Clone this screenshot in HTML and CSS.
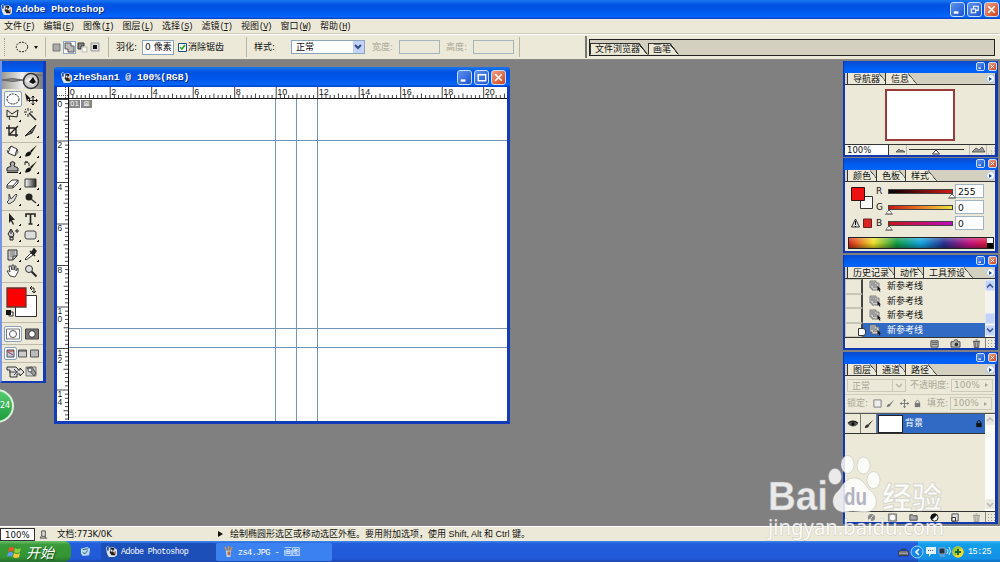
FILE: index.html
```html
<!DOCTYPE html>
<html lang="zh-CN">
<head>
    <meta charset="UTF-8">
    <meta name="viewport" content="width=device-width, initial-scale=1.0">
    <title>Adobe Photoshop</title>
    <link rel="stylesheet" href="styles.css">
</head>
<body>
<!-- Shared symbols -->
<svg class="defs">
    <symbol id="ps" viewBox="0 0 12 12"><path d="M0 2l2-2 2 2 4-1 4 3v6l-3 2H3L1 8z" fill="#dfe5ee"/><path d="M5 2h4v2L7 6l3 1v3H6L4 7z" fill="#222"/><path d="M1 1h2v4H1z" fill="#234fb0"/><path d="M8 7l3-2v5z" fill="#b88763"/><path d="M5 4h2v2H5z" fill="#fff"/></symbol>
    <symbol id="min" viewBox="0 0 14 14"><path d="M3 9h5v2.5H3z" fill="#fff"/></symbol>
    <symbol id="max" viewBox="0 0 14 14"><path d="M3.5 4h8v6.5h-8zM3 4h9" fill="none" stroke="#fff" stroke-width="1.5"/></symbol>
    <symbol id="restore" viewBox="0 0 14 14"><path d="M6 6V3.5h5V8H9M3.5 6.5h4.8v4H3.5z" fill="none" stroke="#fff" stroke-width="1.2"/></symbol>
    <symbol id="close" viewBox="0 0 14 14"><path d="M3.5 3.5l7 7m0-7l-7 7" stroke="#fff" stroke-width="1.8"/></symbol>
    <symbol id="state" viewBox="0 0 12 12"><path d="M1 1h6v2h3v7H3V8H1z" fill="#ccc" stroke="#666" stroke-width=".8"/><path d="M2 3h4M2 5h6M4 7h5" stroke="#555" stroke-width=".8"/><path d="M8.500 6l3.500 3.500h-1.500l1 2h-1.200l-.8-2-1 1z" fill="#111"/></symbol>
    <symbol id="trash" viewBox="0 0 10 10"><path d="M2 3h6l-.6 6.500H2.600zM1 2.500h8M4 1h2" fill="#bbb" stroke="#444" stroke-width=".9"/><path d="M4 4v5M6 4v5" stroke="#555" stroke-width=".8"/></symbol>
    <symbol id="lock" viewBox="0 0 8 10"><path d="M2 5V3q2-3 4 0v2" fill="none" stroke="currentColor"/><path d="M1 4.500h6V9H1z" fill="currentColor"/></symbol>
    <symbol id="brush" viewBox="0 0 14 14"><path d="M13 1L6 7l1.500 1.500zM6 7.500q-4 0-5 5 5 .5 6.500-3.500z" fill="currentColor"/></symbol>
</svg>

<header class="titlebar">
    <svg class="logo"><use href="#ps"/></svg><span>Adobe Photoshop</span>
    <div class="buttons big"><i><svg><use href="#min"/></svg></i><i><svg><use href="#restore"/></svg></i><i class="x"><svg><use href="#close"/></svg></i></div>
</header>

<nav class="menubar">
    <span>文件<b>(<u>F</u>)</b></span><span>编辑<b>(<u>E</u>)</b></span><span>图像<b>(<u>I</u>)</b></span>
    <span>图层<b>(<u>L</u>)</b></span><span>选择<b>(<u>S</u>)</b></span><span>滤镜<b>(<u>T</u>)</b></span>
    <span>视图<b>(<u>V</u>)</b></span><span>窗口<b>(<u>W</u>)</b></span><span>帮助<b>(<u>H</u>)</b></span>
</nav>

<div class="options">
    <div class="opt-tool"><i class="grip"></i>
        <svg width="14" height="12" viewBox="0 0 14 12"><ellipse cx="7" cy="6" rx="5.700" ry="4.800" fill="none" stroke="#222" stroke-dasharray="2 1"/></svg>
        <em class="down"></em></div>
    <div class="opt-modes">
        <svg viewBox="0 0 11 11"><path d="M2 2h7v7H2z" fill="#aaa" stroke="#777"/></svg>
        <svg class="on" viewBox="0 0 11 11"><path d="M1 1h6v3h3v6H4V7H1z" fill="#bbb" stroke="#555"/></svg>
        <svg viewBox="0 0 11 11"><path d="M1 1h6v3H4v3H1z" fill="#888" stroke="#333"/><path d="M5 5h5v5H5z" fill="#f8f8f0" stroke="#bbb"/></svg>
        <svg viewBox="0 0 11 11"><path d="M1 1h8v8H1z" fill="#ddd" stroke="#999"/><path d="M3 3h4v4H3z" fill="#111"/></svg>
    </div>
    <div class="opt-feather"><label>羽化:</label><span class="field">0 像素</span>
        <svg class="check" viewBox="0 0 9 9"><path d="M.5.5h8v8h-8z" fill="#fff" stroke="#1c5180"/><path d="M2 4l2 2 3-4" fill="none" stroke="#21a121" stroke-width="1.500"/></svg><label>消除锯齿</label></div>
    <div class="opt-style"><label>样式:</label>
        <span class="select">正常<i class="arrow"><svg viewBox="0 0 10 10"><path d="M2 4l3 3 3-3" fill="none" stroke="#334d86" stroke-width="2"/></svg></i></span>
        <label class="off">宽度:</label><span class="blank"></span><label class="off">高度:</label><span class="blank"></span></div>
    <div class="well"><div class="tabs"><span>文件浏览器</span><span>画笔</span></div></div>
</div>

<main class="workspace">
    <!-- Toolbox -->
    <section class="toolbox">
        <div class="tb-title"></div>
        <svg class="banner" viewBox="0 0 41 17"><defs><linearGradient id="bn"><stop stop-color="#9a9a94"/><stop offset=".5" stop-color="#eee"/><stop offset="1" stop-color="#777"/></linearGradient></defs><path d="M0 0h41v17H0z" fill="url(#bn)"/><path d="M0 8q10-3 21 0q-10 3-21 0M21 12Q28-1 41 4" fill="#888" stroke="#666"/><circle cx="29" cy="9" r="7.500" fill="#ccc" stroke="#333" stroke-width="1.500"/><path d="M23 9q6-6 12-1l-4 6-4-3z" fill="#eee"/><path d="M27 10l4-5 3 5-3 2z" fill="#111"/></svg>
        <div class="tools">
            <svg class="on" viewBox="0 0 16 14"><ellipse cx="8" cy="7" rx="6" ry="5" fill="none" stroke="#111" stroke-dasharray="2 1"/></svg>
            <svg viewBox="0 0 16 14"><path d="M2 1l6 6-3 0-1 3z" fill="#111"/><path d="M10 4v9M5.500 8.500h9M8.500 5.500L10 4l1.500 1.500M8.500 11.500L10 13l1.500-1.500M7 7L5.500 8.500 7 10M13 7l1.500 1.500L13 10" stroke="#111" fill="none"/></svg>
            <svg class="m" viewBox="0 0 16 14"><path d="M2 2l5 4 6-4-1 7-7-1-3 1zM5 8q-2 2 0 4" fill="none" stroke="#222"/></svg>
            <svg viewBox="0 0 16 14"><path d="M6 5l7 7" stroke="#222" stroke-width="1.500"/><path d="M5 0v3M5 6v3M1 4h3M7 4h3M2 1l1 1M8 1L7 2M2 7l1-1" stroke="#222"/></svg>
            <svg viewBox="0 0 16 14"><path d="M4 1v10h9M1 4h10v9M4 11l9-9" stroke="#222" stroke-width="1.400" fill="none"/></svg>
            <svg class="m" viewBox="0 0 16 14"><path d="M13 1L7 7l2 2zM7 7L2 12l7-3z" stroke="#222" fill="#777"/></svg>
        </div>
        <div class="tools">
            <svg class="m" viewBox="0 0 16 14"><path d="M6 2l6 3-2 7-7-3z" fill="#fff" stroke="#333"/><path d="M3 5l3-3M3 9L2 6M12 5l1 3-3 4" stroke="#555" fill="none"/></svg>
            <svg class="m" viewBox="0 0 16 14"><use href="#brush"/></svg>
            <svg class="m" viewBox="0 0 16 14"><path d="M6 6L5 3q3-3 5 0L9 6l4 2v3H2V8zM2 12.500h11" fill="#aaa" stroke="#222"/></svg>
            <svg class="m" viewBox="0 0 16 14"><use href="#brush"/><path d="M2 2q5 0 4 4M2 2v3M2 2h3" stroke="#222" fill="none"/></svg>
            <svg class="m" viewBox="0 0 16 14"><path d="M2 9l5-5h6L8 10H2zM8 10V12l5-5V4M2 10v2h6" fill="#fff" stroke="#333"/></svg>
            <svg class="m" viewBox="0 0 16 14"><defs><linearGradient id="gr"><stop stop-color="#fff"/><stop offset="1" stop-color="#222"/></linearGradient></defs><path d="M2 3h11v8H2z" fill="url(#gr)" stroke="#333"/></svg>
            <svg class="m" viewBox="0 0 16 14"><path d="M4 2l2 5 5-5 1 1-3 6-5 3-2-2 2-2z" fill="#ddd" stroke="#444"/></svg>
            <svg class="m" viewBox="0 0 16 14"><circle cx="6" cy="5" r="3.500" fill="#222"/><path d="M8 7l5 4" stroke="#333" stroke-width="1.500"/></svg>
        </div>
        <div class="tools">
            <svg class="m" viewBox="0 0 16 14"><path d="M4 1v10l2-2 2 4 1-1-2-4h3z" fill="#222"/></svg>
            <svg class="m" viewBox="0 0 16 14"><path d="M3 5V2h9v3M7.500 2v10M5.500 12h4" fill="none" stroke="#222" stroke-width="1.600"/></svg>
            <svg class="m" viewBox="0 0 16 14"><path d="M6 1l3 5-1 3H5L3 6zM5 9h3v3H5zM6 2v4M10 3h4M12 1v4" fill="#ccc" stroke="#222"/></svg>
            <svg class="m" viewBox="0 0 16 14"><rect x="2" y="3" width="11" height="8" rx="2" fill="#ddd" stroke="#444"/></svg>
        </div>
        <div class="tools">
            <svg class="m" viewBox="0 0 16 14"><path d="M3 2h9v6l-4 4H3zM8 12V8h4" fill="#ccc" stroke="#333"/><path d="M5 4h5M5 6h5M5 8h3" stroke="#777"/></svg>
            <svg class="m" viewBox="0 0 16 14"><path d="M8 5L2 11l1 1 7-5z" fill="#fff" stroke="#333"/><path d="M7 3l5 5M9 4l2-3 2 2-2 3z" fill="#222" stroke="#222" stroke-width="1.500"/></svg>
            <svg viewBox="0 0 16 14"><path d="M5 12L2 7q1-1 3 1L4 2l2 0 1 4V1h2v5l1-4 1 0v5l2-3v4l-3 5z" fill="#fff" stroke="#333" stroke-width=".9"/></svg>
            <svg viewBox="0 0 16 14"><circle cx="6" cy="5" r="3.500" fill="#ddd" stroke="#333"/><path d="M8.500 7.500l5 5" stroke="#222" stroke-width="2"/></svg>
        </div>
        <div class="swatches">
            <svg viewBox="0 0 40 38"><path d="M13.500 11.500h21v21h-21z" fill="#fff" stroke="#333"/><path d="M5 4h19v19H5z" fill="#f00" stroke="#633" stroke-width="1.300"/><path d="M28 4h4v5M28 4l2-2M28 4l2 2M32 9l-2-2M32 9l2-2" fill="none" stroke="#222"/><path d="M7 28h4v4H7z" fill="#fff" stroke="#222"/><path d="M4 26h5v5H4z" fill="#111"/></svg>
        </div>
        <div class="modes">
            <svg class="on" viewBox="0 0 16 14"><path d="M1.500 2h13v10h-13z" fill="#fff" stroke="#777"/><circle cx="8" cy="7" r="3.500" fill="#fff" stroke="#555"/></svg>
            <svg viewBox="0 0 16 14"><path d="M1.500 2h13v10h-13z" fill="#777" stroke="#444"/><circle cx="8" cy="7" r="3.300" fill="#fff" stroke="#333"/></svg>
        </div>
        <div class="modes screens">
            <svg class="on" viewBox="0 0 11 11"><path d="M2 2h7v7H2z" fill="#bcd" stroke="#456"/><path d="M3 4l5 3M2 3h7" stroke="#b33"/></svg>
            <svg viewBox="0 0 11 11"><path d="M1.500 2h8v7h-8z" fill="#ccc" stroke="#555"/><path d="M1 3h9" stroke="#444"/></svg>
            <svg viewBox="0 0 11 11"><path d="M1.500 2h8v7h-8z" fill="#bbb" stroke="#555"/></svg>
        </div>
        <div class="modes">
            <svg class="jump" viewBox="0 0 34 14"><path d="M2 2h9l2 2v1h2V3l4 4-4 4V9h-3v3H5V5H2z" fill="#ddd" stroke="#333"/><path d="M4 7h9M9 4l3 3-3 3" stroke="#444" fill="none"/><path d="M21 2h10v9H21z" fill="#ccc" stroke="#777"/><path d="M22 3l7 8 2-3-4-6z" fill="#999" stroke="#555"/><circle cx="25" cy="5" r="2" fill="#eee" stroke="#555"/></svg>
        </div>
    </section>

    <!-- Document window -->
    <section class="document">
        <div class="doc-title"><svg class="logo"><use href="#ps"/></svg><span>zheShan1 @ 100%(RGB)</span>
            <div class="buttons big"><i><svg><use href="#min"/></svg></i><i><svg><use href="#max"/></svg></i><i class="x"><svg><use href="#close"/></svg></i></div></div>
        <div class="doc-body">
            <svg class="corner" viewBox="0 0 12 12"><path d="M0 8.500h11M8.500 0v11" stroke="#555" stroke-dasharray="1 1"/><path d="M0 11.500h12M11.500 0v12" stroke="#111"/></svg>
            <svg class="ruler-h" id="rulerH"></svg>
            <svg class="ruler-v" id="rulerV"></svg>
            <div class="canvas" id="canvas"><span class="slice">01</span><span class="slice">⊠</span></div>
        </div>
    </section>

    <!-- Navigator -->
    <section class="palette navigator">
        <div class="pal-title"><div class="buttons"><i><svg><use href="#min"/></svg></i><i class="x"><svg><use href="#close"/></svg></i></div></div>
        <div class="tabs"><span>导航器</span><span>信息</span><em class="more"></em></div>
        <div class="nav-view"><div></div></div>
        <div class="nav-foot"><span>100%</span>
            <svg viewBox="0 0 106 10"><path d="M7 7l3-3 2 2 1-1 3 2zM83 7l4-4 3 2 3-3 3 5z" fill="#999" stroke="#444" stroke-width=".8"/><path d="M20 4.500h55" stroke="#333"/><path d="M43.500 9l3.500-4 3.500 4z" fill="#fff" stroke="#333"/><path d="M17.500 0v10M80.500 0v10M97.500 0v10" stroke="#bbb"/><path d="M99 9h1M102 9h1M105 9h1M102 6h1M105 6h1M105 3h1" stroke="#999"/></svg></div>
    </section>

    <!-- Color -->
    <section class="palette color">
        <div class="pal-title"><div class="buttons"><i><svg><use href="#min"/></svg></i><i class="x"><svg><use href="#close"/></svg></i></div></div>
        <div class="tabs"><span>颜色</span><span>色板</span><span>样式</span><em class="more"></em></div>
        <div class="color-body">
            <svg viewBox="0 0 28 50"><path d="M15.500 14.500h12v12h-12z" fill="#fff" stroke="#333"/><path d="M6.500 5.500h13v13h-13z" fill="#e11" stroke="#311"/><path d="M6.500 45l4-8 4 8z" fill="#ddd" stroke="#333"/><path d="M10.500 39v4M10.500 44v1" stroke="#111"/><path d="M18.500 37h8v8.500h-8z" fill="#d22" stroke="#622"/></svg>
            <div class="channels">
                <label>R</label><div class="bar red"><i class="end"></i></div><span>255</span>
                <label>G</label><div class="bar green"><i></i></div><span>0</span>
                <label>B</label><div class="bar blue"><i></i></div><span>0</span>
            </div>
        </div>
        <div class="spectrum"><i></i></div>
    </section>

    <!-- History -->
    <section class="palette history">
        <div class="pal-title"><div class="buttons"><i><svg><use href="#min"/></svg></i><i class="x"><svg><use href="#close"/></svg></i></div></div>
        <div class="tabs"><span>历史记录</span><span>动作</span><span>工具预设</span><em class="more"></em></div>
        <div class="hist-body">
            <ul>
                <li><i></i><svg><use href="#state"/></svg>新参考线</li>
                <li><i></i><svg><use href="#state"/></svg>新参考线</li>
                <li><i></i><svg><use href="#state"/></svg>新参考线</li>
                <li class="on"><i></i><svg><use href="#state"/></svg>新参考线</li>
            </ul>
            <svg class="scroll" viewBox="0 0 10 57"><path d="M0 0h10v57H0z" fill="#f4f3ee"/><path d="M.5 1h9v10h-9zM.5 34h9v10h-9zM.5 46h9v10h-9z" fill="#c4d3fb"/><path d="M2 8l3-3 3 3M2 49l3 3 3-3" fill="none" stroke="#3b5597" stroke-width="1.600"/></svg>
        </div>
        <div class="pal-foot">
            <svg viewBox="0 0 10 10"><path d="M1 2h8v7H1z" fill="#bbb" stroke="#444"/><path d="M2 4h6M2 6h6" stroke="#555"/></svg>
            <svg viewBox="0 0 10 10"><path d="M0 3h3l1-2h3v2h3v6H0z" fill="#bbb" stroke="#444"/><circle cx="6" cy="6" r="2" fill="#333"/></svg>
            <svg><use href="#trash"/></svg>
            <em class="size"></em>
        </div>
    </section>

    <!-- Layers -->
    <section class="palette layers">
        <div class="pal-title"><div class="buttons"><i><svg><use href="#min"/></svg></i><i class="x"><svg><use href="#close"/></svg></i></div></div>
        <div class="tabs"><span>图层</span><span>通道</span><span>路径</span><em class="more"></em></div>
        <div class="blend"><span class="mode">正常<i><svg viewBox="0 0 10 10"><path d="M2 4l3 3 3-3" fill="none" stroke="#bbb8a8" stroke-width="1.500"/></svg></i></span><label>不透明度:</label><span class="pct">100%<i></i></span></div>
        <div class="locks"><label>锁定:</label>
            <svg viewBox="0 0 10 10"><path d="M1 1h8v8H1z" fill="#eee" stroke="#777"/></svg>
            <svg viewBox="0 0 14 14"><use href="#brush"/></svg>
            <svg viewBox="0 0 10 10"><path d="M5 0v10M0 5h10M3.500 1.500h3M3.500 8.500h3M1.500 3.500v3M8.500 3.500v3" stroke="#777"/></svg>
            <svg><use href="#lock"/></svg>
            <label>填充:</label><span class="pct">100%<i></i></span></div>
        <div class="layer-body">
            <div class="layer-list">
                <div class="layer">
                    <span><svg viewBox="0 0 12 10"><path d="M0 5q6-6 12 0-6 6-12 0z" fill="#555"/><path d="M0 4q6-5 12 0" fill="none" stroke="#111" stroke-width="1.500"/><circle cx="6" cy="5" r="2" fill="#111"/></svg></span>
                    <span><svg viewBox="0 0 14 14"><use href="#brush"/></svg></span>
                    <i class="thumb"></i><b>背景</b><svg class="lk"><use href="#lock"/></svg>
                </div>
            </div>
            <svg class="scroll" viewBox="0 0 10 99"><path d="M0 0h10v99H0z" fill="#fbfbf9"/><path d="M.5 1h9v10h-9zM.5 87h9v10h-9z" fill="#ebe9df"/><path d="M2 7l3-3 3 3M2 91l3 3 3-3" fill="none" stroke="#bbb" stroke-width="1.500"/></svg>
        </div>
        <div class="pal-foot">
            <svg viewBox="0 0 10 10"><circle cx="5" cy="5" r="4" fill="#888"/><path d="M2 9l6-8" stroke="#ddd"/></svg>
            <svg viewBox="0 0 10 10"><path d="M.5 1h9v8h-9z" fill="#aaa" stroke="#777"/><circle cx="5" cy="5" r="3" fill="#fff"/></svg>
            <svg viewBox="0 0 10 10"><path d="M1 2h3l1 1h4v5H1z" fill="#aaa" stroke="#444"/></svg>
            <svg viewBox="0 0 10 10"><circle cx="5" cy="5" r="4" fill="#fff" stroke="#111"/><path d="M2 8A4 4 0 0 1 8 2z" fill="#111"/></svg>
            <svg viewBox="0 0 10 10"><path d="M1 1h7v8H1z" fill="#ddd" stroke="#444"/><path d="M1 9V5h4v4z" fill="#eee" stroke="#222"/></svg>
            <svg class="dim"><use href="#trash"/></svg>
            <em class="size"></em>
        </div>
    </section>

    <div class="badge">24</div>
</main>

<footer class="statusbar">
    <span class="zoom">100%</span>
    <svg viewBox="0 0 10 10"><path d="M3 1h4v6H3zM1 9h8M2 7v2M7 7v2" fill="#ddd" stroke="#444"/></svg>
    <span class="size-info">文档:773K/0K</span><em class="play"></em>
    <span class="hint">绘制椭圆形选区或移动选区外框。要用附加选项，使用 Shift, Alt 和 Ctrl 键。</span>
</footer>

<div class="taskbar">
    <div class="start"><svg viewBox="0 0 14 14"><path d="M2 3q3-2 5 0L6 7q-2-2-5 0z" fill="#e8582c"/><path d="M8 3q3 2 6 0l-1 4q-3 2-6 0z" fill="#8bd03c"/><path d="M1 8q3-2 5 0l-1 4q-2-2-5 0z" fill="#5b9df5"/><path d="M7 8q3 2 6 0l-1 4q-3 2-6 0z" fill="#fbc93a"/></svg>开始</div>
    <svg class="quick" viewBox="0 0 12 12"><path d="M1 3l7-2 3 2-1 7-7 1-2-3z" fill="#b9d9f7"/><path d="M3 4l6-1M3 7q3 3 5-2" stroke="#256" fill="none"/></svg>
    <div class="task on"><svg><use href="#ps"/></svg>Adobe Photoshop</div>
    <div class="task"><svg viewBox="0 0 12 12"><path d="M3 5h6l-1 7H4z" fill="#c9d3de"/><path d="M4 5L2 1M6 5V0M8 5l2-4" stroke="#d89140" stroke-width="1.500"/><path d="M5 6h3v4H5z" fill="#b56d45"/></svg>zs4.JPG - 画图</div>
    <svg class="kbd" viewBox="0 0 12 10"><path d="M1 4h10v5H1z" fill="#ddd" stroke="#222"/><path d="M2 6h8M2 8h8M3 2h6" stroke="#333"/></svg>
    <div class="tray">
        <svg viewBox="0 0 52 14"><circle cx="5" cy="7" r="6" fill="#1a85e8" stroke="#9cd4ff"/><path d="M7 4L4 7l3 3" fill="none" stroke="#fff" stroke-width="1.600"/><path d="M14 2h10v7h-5l-2 3V9h-3z" fill="#e5f3ff"/><path d="M16 5.500h6" stroke="#467" stroke-dasharray="1 1"/><path d="M27 3h6v6h-6zM28 11h5" fill="#234" stroke="#9ac"/><path d="M35 4q2 2 0 5M37 2q3 4 0 8" stroke="#d6e6ff" fill="none"/><circle cx="46" cy="7" r="5.700" fill="#f4d928"/><path d="M41 4q5-4 9-1-5 2-6 8-4-2-3-7z" fill="#9cc92a"/><path d="M46 4v6M43 7h6" stroke="#164" stroke-width="2"/></svg>
        <span>15:25</span>
    </div>
</div>

<svg class="watermark" viewBox="0 0 190 95">
    <g fill="#fff" stroke="#aaa" stroke-opacity=".45">
        <text x="4" y="56" class="wm-bai" textLength="60" lengthAdjust="spacingAndGlyphs">Bai</text>
        <ellipse cx="71" cy="22.500" rx="6.500" ry="8"/><ellipse cx="83.500" cy="10.500" rx="6.500" ry="9"/><ellipse cx="99.500" cy="11.500" rx="6.500" ry="8.500"/><ellipse cx="109.500" cy="26" rx="6.500" ry="8.500"/>
        <path d="M90 24c9 0 11 8 17 13 8 6 7 20-4 21-7 1-13-2-20 0-13 2-18-11-11-19 7-6 8-15 18-15z"/>
        <text x="80" y="51" class="wm-du" textLength="23" lengthAdjust="spacingAndGlyphs">du</text>
        <text x="118" y="54" class="wm-cn" textLength="60">经验</text>
        <text x="4" y="80.500" class="wm-url" textLength="176" lengthAdjust="spacingAndGlyphs">jingyan.baidu.com</text>
    </g>
</svg>

<script src="rulers.js"></script>
</body>
</html>
```

FILE: rulers.js
```js
// one ruler unit in pixels
const UNIT = 20.75;

function drawRuler(el, length, vertical) {
    let out = '';
    for (let i = 0; i * UNIT / 5 < length; i++) {
        const p = i * UNIT / 5 + (vertical ? 0.5 : -0.3);
        const size = i % 10 === 0 ? 12 : (i % 5 === 0 ? 4.5 : 3);
        out += vertical
            ? `<path d="M${11 - size} ${p}H11"/>`
            : `<path d="M${p} ${11 - size}V11"/>`;
        if (i % 10 === 0) {
            const label = String(i / 5);
            if (vertical) {
                // digits are stacked one under the other
                [...label].forEach((c, n) => {
                    out += `<text x="0.5" y="${p + 7 + n * 7.5}">${c}</text>`;
                });
            } else {
                out += `<text x="${p + 1}" y="7.500">${label}</text>`;
            }
        }
    }
    out += vertical ? `<path class="edge" d="M11.500 0V${length}"/>` : `<path class="edge" d="M0 11.500H${length}"/>`;
    el.innerHTML = out;
}

drawRuler(document.getElementById('rulerH'), 438, false);
drawRuler(document.getElementById('rulerV'), 321, true);

// guides, in canvas pixels
const canvas = document.getElementById('canvas');
[['v', 206], ['v', 227], ['v', 248], ['h', 41], ['h', 229], ['h', 248]].forEach(([dir, pos]) => {
    const guide = document.createElement('div');
    guide.className = 'guide ' + dir;
    guide.style.setProperty('--pos', pos + 'px');
    canvas.appendChild(guide);
});
```

FILE: styles.css
```css
* {
    box-sizing: border-box;
}

body {
    margin: 0;
    width: 1000px;
    height: 562px;
    overflow: hidden;
    display: flex;
    flex-direction: column;
    position: relative;
    background: #808080;
    color: #111;
    font: 9px/11px "DejaVu Sans", "Noto Sans CJK SC", sans-serif;
    white-space: nowrap;
}

i, em { font-style: normal; }
svg { flex: none; display: block; overflow: visible; }
.defs { position: absolute; width: 0; height: 0; }

/* title bars */
.titlebar, .doc-title {
    display: flex;
    align-items: center;
    background: linear-gradient(#1b78ef, #0052e2 25%, #0057ea 60%, #0266ff 88%, #003cc0);
    color: #fff;
    font: bold 9.8px/16px "Liberation Mono", monospace;
    text-shadow: 1px 1px #0a2a80;
}

.titlebar { flex: none; height: 19px; padding-left: 1px; }
.logo { width: 11px; height: 11px; margin-right: 4px; }
.buttons { display: flex; gap: 3px; margin-left: auto; }

.buttons i {
    width: 9px;
    height: 9px;
    border: 1px solid #c4dcff;
    border-radius: 2px;
    background: linear-gradient(135deg, #5d93f0, #1c53cf);
}

.buttons i.x { background: linear-gradient(135deg, #f0a084, #d2421c); }
.buttons svg { width: 7px; height: 7px; }
.buttons.big { gap: 2px; }
.buttons.big i { width: 15px; height: 15px; border-radius: 3px; }
.buttons.big svg { width: 13px; height: 13px; }
.titlebar .buttons { padding-right: 1px; }

/* menu */
.menubar {
    flex: none;
    height: 15px;
    display: flex;
    align-items: center;
    padding-left: 4px;
    background: #ece9d8;
    border-bottom: 1px solid #cfccbb;
}

.menubar span { width: 39.5px; }
.menubar b { font: 8.5px "Liberation Mono", monospace; letter-spacing: -1px; }

/* options bar */
.options {
    flex: none;
    height: 26px;
    display: flex;
    align-items: center;
    background: #ece9d8;
    border-top: 1px solid #fff;
    border-bottom: 1px solid #8c8a80;
    font-size: 9px;
}

.options > div { display: flex; align-items: center; height: 20px; }
.opt-tool { width: 46px; border-right: 1px solid #b8b5a5; }
.grip { width: 1px; height: 18px; margin: 0 10px 0 4px; border-left: 1px dotted #999; }
.down { margin-left: 5px; border: 2.5px solid transparent; border-top: 3px solid #111; border-bottom: 0; }
.opt-modes { width: 63px; gap: 2px; padding-left: 5px; border-right: 1px solid #b8b5a5; }
.opt-modes svg { width: 11px; height: 11px; }
.opt-modes .on { outline: 1px solid #8ba7c4; background: #fff; }
.opt-feather { width: 138px; padding-left: 7px; border-right: 1px solid #b8b5a5; }
.field { width: 32px; height: 15px; margin: 0 4px 0 5px; padding: 1px 2px; background: #fff; border: 1px solid #8ca6bc; }
.check { width: 9px; height: 9px; margin-right: 1px; }
.opt-style { width: 273px; padding-left: 7px; border-right: 1px solid #b8b5a5; }
.opt-style .select { margin-left: 16px; }
.select { display: flex; justify-content: space-between; width: 74px; height: 14px; padding-left: 4px; line-height: 13px; background: #fff; border: 1px solid #8ca6bc; }
.arrow { width: 11px; background: #c3d3fb; }
.arrow svg { width: 10px; height: 10px; }
.off { margin-left: 7px; color: #aaa797; }
.blank { width: 41px; height: 14px; margin-left: 6px; border: 1px solid #a3b5bd; }
.blank + .off { margin-left: 6px; }

.options .well {
    width: 414px;
    margin-left: 65px;
    height: 22px;
    padding: 2px 4px 2px 2px;
    border-left: 2px solid #77756d;
}

.options .well .tabs {
    flex: 1;
    height: 17px;
    padding: 0;
    border: 1px solid #222;
}

/* tabs with a slanted right edge */
.tabs {
    flex: none;
    display: flex;
    align-items: flex-end;
    height: 12px;
    padding-left: 2px;
    background: #d4d0c0;
    border-bottom: 1px solid #333;
}

.tabs span {
    height: 11px;
    padding: 0 8px 0 5px;
    line-height: 12px;
    background: #ece9d8;
    border-left: 1px solid #333;
    position: relative;
    clip-path: polygon(0 0, calc(100% - 9px) 0, 100% 100%, 0 100%);
}

.well .tabs span {
    height: 12px;
    padding-left: 4px;
    line-height: 11px;
    border-top: 1px solid #333;
}

.tabs span::after {
    content: "";
    position: absolute;
    inset: 0 0 0 auto;
    width: 9px;
    background: linear-gradient(to top right, transparent 45%, #222 47% 56%, transparent 57%);
}

.palette .tabs span + span { margin-left: -3px; }

.more {
    margin-left: auto;
    width: 9px;
    height: 9px;
    margin-bottom: 1px;
    border-radius: 50%;
    background: #fff;
    border: 1px solid #a9c1ee;
    display: flex;
    align-items: center;
    justify-content: center;
}

.more::after { content: ""; border: 2px solid transparent; border-left: 3px solid #1444a8; border-right: 0; }

.workspace { flex: none; height: 466px; position: relative; }

/* toolbox */
.toolbox {
    position: absolute;
    left: 0;
    top: 1px;
    width: 46px;
    height: 322px;
    background: #ece9d8;
    border: solid #123bb5;
    border-width: 0 3px 2px 2px;
    border-left-color: #7795e5;
}

.tb-title { height: 11px; background: linear-gradient(#0b4bd0, #0060f8); }
.banner { width: 41px; height: 17px; margin-bottom: 3px; }

.tools {
    display: grid;
    grid-template-columns: 18px 18px;
    grid-auto-rows: 16px;
    padding: 0 0 2px 3px;
    margin-bottom: 1px;
    border-bottom: 1px solid #bdbaa9;
}

.tools svg { width: 16px; height: 14px; }
.tools .on, .modes .on { background: #fff; outline: 1px solid #8aa4c0; border-radius: 1px; }

/* corner mark of tools with a flyout */
.tools .m {
    background: linear-gradient(135deg, transparent 50%, #111 51%) right bottom / 3px 3px no-repeat;
}

.swatches { height: 39px; border-bottom: 1px solid #bdbaa9; }
.swatches svg { width: 40px; height: 38px; }
.modes { display: flex; gap: 3px; padding: 4px 3px 3px; border-bottom: 1px solid #bdbaa9; }
.modes svg { width: 16px; height: 14px; }
.modes:last-child { border: 0; padding-top: 2px; }
.modes.screens { gap: 1px; padding-top: 3px; }
.modes.screens svg { width: 11px; height: 11px; }
.modes .jump { width: 34px; }

/* document window */
.document {
    position: absolute;
    left: 54px;
    top: 7px;
    width: 456px;
    height: 357px;
    display: flex;
    flex-direction: column;
    padding: 0 3px 3px;
    background: #123cba;
    border-radius: 4px 4px 0 0;
}

.doc-title { flex: none; height: 20px; margin: 0 -3px; padding: 1px 4px 0 7px; font-size: 9.7px; border-radius: 4px 4px 0 0; }
.doc-title .logo { margin-right: 1px; }
.doc-body { flex: 1; display: grid; grid-template: 12px 1fr / 12px 1fr; background: #fff; overflow: hidden; }
.corner { width: 12px; height: 12px; }
.ruler-h { width: 438px; height: 12px; overflow: hidden; }
.ruler-v { width: 12px; height: 322px; overflow: hidden; }
.ruler-h, .ruler-v { font: 9px "Liberation Sans", sans-serif; fill: #222; }
.ruler-v { font-size: 8.5px; }
.ruler-h path, .ruler-v path { stroke: #333; stroke-width: .9; }
.ruler-h .edge, .ruler-v .edge { stroke: #111; stroke-width: 1; }
.canvas { position: relative; display: flex; align-items: flex-start; gap: 1px; padding-top: 1px; overflow: hidden; }
.slice { width: 11px; height: 8px; font-size: 7px; line-height: 8px; text-align: center; color: #fff; background: #888; }
.guide { position: absolute; background: #7395b5; }
.guide.v { left: var(--pos); top: 0; width: 1px; height: 100%; }
.guide.h { top: var(--pos); left: 0; height: 1px; width: 100%; }

/* palettes */
.palette {
    position: absolute;
    left: 843px;
    width: 155px;
    display: flex;
    flex-direction: column;
    border: solid #1238ae;
    border-width: 0 3px 2px 2px;
    background: #ece9d8;
}

.pal-title {
    flex: none;
    display: flex;
    height: 12px;
    margin: 0 -2px 0 -1px;
    padding: 1px 0;
    background: linear-gradient(#0a49cc, #005ff2 60%, #0062fa);
}

.navigator { top: 1px; height: 96px; }
.color { top: 98px; height: 95px; }
.history { top: 195px; height: 95px; }
.layers { top: 292px; height: 172px; }

.nav-view { flex: 1; display: flex; justify-content: center; padding-top: 4px; }
.nav-view div { width: 70px; height: 52px; background: #fff; border: 2px solid #9c3b3b; }
.nav-foot { display: flex; height: 11px; border-top: 1px solid #333; overflow: hidden; }
.nav-foot span { width: 44px; padding: 0 2px; line-height: 10px; font-size: 8.5px; background: #fff; border-right: 1px solid #333; }
.nav-foot svg { width: 106px; height: 10px; }

.color-body { display: flex; flex: 1; }
.color-body > svg { width: 28px; height: 50px; }
.channels { display: grid; grid-template-columns: 10px 65px 29px; grid-auto-rows: 16px; column-gap: 2px; padding: 1px 0 0 3px; align-items: center; }
.channels span { height: 14px; padding: 1px 2px; background: #fff; border: 1px solid #a0b4c5; font-size: 9.2px; }
.bar { height: 5px; border: 1px solid #444; position: relative; }
.bar i { position: absolute; left: -4px; top: 4px; width: 8px; height: 5px; background: #333; clip-path: polygon(50% 0, 100% 100%, 0 100%); }
.bar i::after { content: ""; position: absolute; inset: 1px; background: #fff; clip-path: polygon(50% 0, 100% 100%, 0 100%); }
.bar i.end { left: auto; right: -4px; }
.red { background: linear-gradient(90deg, #000, #d41a1a); }
.green { background: linear-gradient(90deg, #c81414, #e87b22, #ede23d); }
.blue { background: linear-gradient(90deg, #c81414, #c00bc0); }

.spectrum {
    height: 12px;
    margin: 0 1px 2px 3px;
    border: 1px solid #222;
    background: linear-gradient(rgba(255, 255, 255, .25), transparent 50%, rgba(0, 0, 0, .35)),
        linear-gradient(90deg, #d9261c, #f1e329 17%, #119b43 33%, #12a5df 50%, #293091 66%, #c5127e 84%, #e32028);
}

.spectrum i { display: block; width: 6px; height: 10px; margin-left: auto; background: linear-gradient(#fff 50%, #000 50%); }

.hist-body, .layer-body { flex: 1; display: flex; min-height: 0; }
.hist-body ul { flex: 1; margin: 0; padding: 0; list-style: none; overflow: hidden; }
.hist-body li { display: flex; align-items: center; height: 14.6px; line-height: 12px; }
.hist-body li i { width: 18px; height: 100%; border: 1px solid #c8c5b5; border-right: 2px solid #444; background: #ece9d8; }
.hist-body li svg { width: 12px; height: 12px; margin: 0 6px; }
.hist-body .on { background: #316ac5; color: #fff; }
.hist-body .on i { position: relative; }
.hist-body .on i::after { content: ""; position: absolute; right: -5px; top: 4px; width: 6px; height: 6px; background: #fff; border: 1px solid #333; border-radius: 0 3px 3px 0; }
.scroll { width: 10px; height: 100%; }

.pal-foot { flex: none; display: flex; align-items: center; justify-content: flex-end; gap: 12px; height: 11px; border-top: 1px solid #333; }
.pal-foot svg { width: 9px; height: 9px; }
.size { width: 10px; height: 10px; margin-left: -8px; border-left: 1px solid #888; background: radial-gradient(#999 .6px, transparent 1px) 1px 1px / 3px 3px; }

.blend, .locks { display: flex; align-items: center; flex: none; height: 18px; padding-left: 2px; color: #aaa797; border-bottom: 1px solid #cfccbc; }
.blend { height: 19px; }
.mode { width: 59px; height: 13px; padding-left: 4px; margin-right: 4px; border: 1px solid #ccc9ba; display: flex; justify-content: space-between; line-height: 12px; }
.mode i { width: 13px; padding-left: 1px; border-left: 1px solid #ccc9ba; }
.mode svg { width: 10px; height: 10px; }
.pct { width: 42px; height: 13px; margin-left: 2px; padding-left: 2px; border: 1px solid #ccc9ba; display: flex; align-items: center; }
.pct i { margin-left: 5px; border: 2px solid transparent; border-left: 3px solid #aaa797; border-right: 0; }
.locks svg { width: 9px; height: 9px; margin-left: 4.5px; color: #777; }
.locks svg + label { margin-left: 5px; }

.layer-body { border-top: 1px solid #555; }
.layer-list { flex: 1; }
.layer { display: flex; align-items: center; height: 20px; background: #316ac5; color: #fff; border-bottom: 1px solid #333; }
.layer span { width: 16px; height: 100%; display: flex; align-items: center; justify-content: center; background: #ece9d8; border-right: 1px solid #777; color: #333; }
.layer span svg { width: 10px; height: 10px; }
.thumb { width: 25px; height: 18px; margin: 0 2px 0 1px; background: #fff; border: 1px solid #222; }
.layer b { font-weight: normal; }
.lk { width: 8px; height: 9px; margin: 0 2px 0 auto; color: #111; }
.dim { opacity: .5; }

/* floating green badge */
.badge {
    position: absolute;
    left: -20px;
    top: 329px;
    width: 34px;
    height: 34px;
    padding-left: 18px;
    border-radius: 50%;
    border: 2px solid #d9efd9;
    background: linear-gradient(#58cb72, #1b9c3b);
    color: #fff;
    font-size: 8px;
    line-height: 30px;
}

/* status bar */
.statusbar { flex: none; display: flex; align-items: center; height: 15px; background: #ece9d8; border-top: 1px solid #fff; }
.zoom { width: 35px; height: 13px; padding: 1px 4px; background: #fff; border: 1px solid #333; font-size: 8.6px; line-height: 10px; }
.statusbar svg { width: 9px; height: 9px; margin-left: 4px; }
.size-info { width: 161px; margin-left: 9px; font-size: 8.6px; letter-spacing: -.15px; }
.play { border: 3.5px solid transparent; border-left: 5px solid #111; border-right: 0; }
.hint { margin-left: 7px; font-family: "Liberation Sans", "Noto Sans CJK SC", sans-serif; font-size: 9px; }

/* taskbar */
.taskbar {
    flex: none;
    display: flex;
    align-items: center;
    height: 21px;
    background: linear-gradient(#3f8cf0, #245edb 12%, #2159d8 85%, #1b47ac);
    color: #fff;
    font: 8px "Liberation Mono", "Noto Sans CJK SC", monospace;
}

.start {
    display: flex;
    align-items: center;
    gap: 5px;
    width: 71px;
    height: 21px;
    padding-left: 7px;
    border-radius: 0 7px 7px 0;
    background: linear-gradient(#6cc26c, #399a39 18%, #349434 75%, #25702a);
    font: italic 14px/18px "Noto Sans CJK SC", sans-serif;
    text-shadow: 1px 1px 1px #1b4d1b;
}

.start svg { width: 14px; height: 14px; }
.quick { width: 11px; height: 11px; margin: 0 10px 0 9px; }
.task { display: flex; align-items: center; gap: 4px; width: 116px; height: 18px; padding-left: 7px; border-radius: 2px; background: #3c81f0; font-size: 8.6px; letter-spacing: -.6px; }
.task.on { width: 115px; background: #1d4fb8; font-size: 8.3px; letter-spacing: -.5px; padding-left: 5px; }
.task svg { width: 11px; height: 11px; }
.kbd { width: 11px; height: 10px; margin: 0 9px 0 auto; }
.tray { display: flex; align-items: center; width: 82px; height: 21px; background: linear-gradient(#3fb4f7, #139ee9 15%, #1290e6 85%, #0c6bc0); }
.tray svg { width: 52px; height: 14px; margin-left: -6px; }
.tray span { margin-left: 4px; font-size: 8.5px; letter-spacing: -.5px; }

/* site watermark lying over everything */
.watermark { position: absolute; left: 764px; top: 454px; width: 190px; height: 95px; opacity: .84; }
.wm-bai { font: bold 40px "Liberation Sans", sans-serif; }
.wm-du { font: bold 24px "Liberation Sans", sans-serif; fill: #a9abbc; stroke: none; }
.wm-cn { font: bold 30px "Noto Sans CJK SC", sans-serif; }
.wm-url { font: 21.5px "Noto Sans", sans-serif; stroke: #999; stroke-width: 1.2px; paint-order: stroke; }
```
